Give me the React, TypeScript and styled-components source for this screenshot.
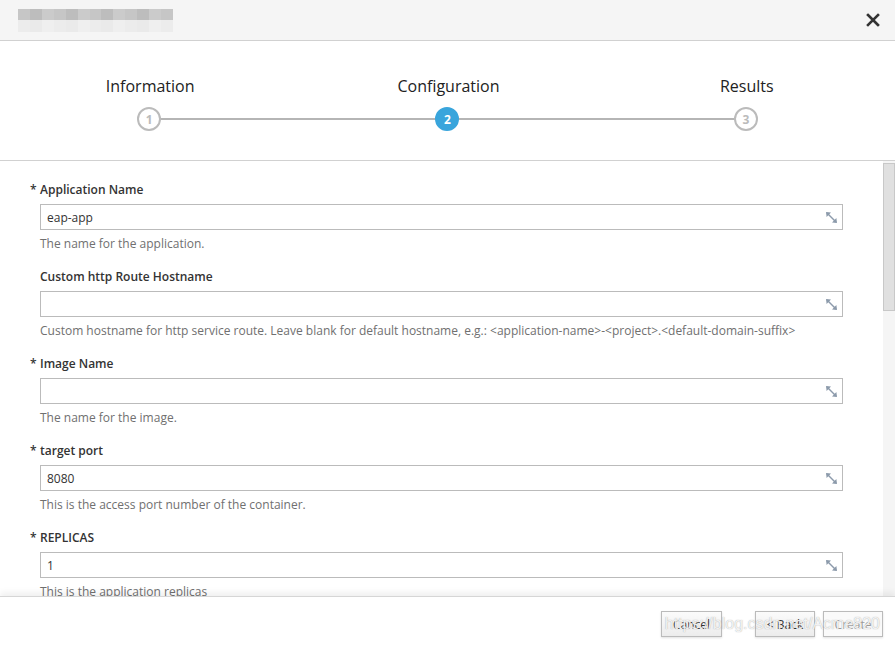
import React from 'react';
import styled, { createGlobalStyle } from 'styled-components';

const GlobalStyle = createGlobalStyle`
	html, body {
		margin: 0;
		padding: 0;
		background: #ffffff;
		font-family: 'Open Sans', 'Noto Sans', Arial, sans-serif;
		color: #333333;
	}
	* { box-sizing: border-box; }
`;

type Field = {
	label: string;
	required?: boolean;
	value?: string;
	help: string;
};

const fields: Field[] = [
	{ label: 'Application Name', required: true, value: 'eap-app', help: 'The name for the application.' },
	{
		label: 'Custom http Route Hostname',
		help: 'Custom hostname for http service route. Leave blank for default hostname, e.g.: <application-name>-<project>.<default-domain-suffix>',
	},
	{ label: 'Image Name', required: true, help: 'The name for the image.' },
	{ label: 'target port', required: true, value: '8080', help: 'This is the access port number of the container.' },
	{ label: 'REPLICAS', required: true, value: '1', help: 'This is the application replicas' },
];

const steps = ['Information', 'Configuration', 'Results'];
const activeStep = 1;

const App: React.FC = () => {
	return (
		<>
			<GlobalStyle />
			<Dialog>
				<Header>
					<BlurTitle>
						{Array.from({ length: 13 }).map((_, i) => (
							<BlurCell key={i} $shade={i % 3} />
						))}
					</BlurTitle>
					<CloseButton aria-label='close'>
						<svg width='14' height='14' viewBox='0 0 14 14'>
							<path d='M2 2 L12 12 M12 2 L2 12' stroke='#333' strokeWidth='2.6' strokeLinecap='square' />
						</svg>
					</CloseButton>
				</Header>

				<Steps>
					{steps.map((s, i) => (
						<Step key={s}>
							<StepLabel>{s}</StepLabel>
							<StepTrack $first={i === 0} $last={i === steps.length - 1}>
								<StepCircle $active={i === activeStep}>{i + 1}</StepCircle>
							</StepTrack>
						</Step>
					))}
				</Steps>

				<Body>
					<FormArea>
						{fields.map((f) => (
							<FieldGroup key={f.label}>
								<Label $required={f.required}>{f.label}</Label>
								<InputBox>
									<InputText>{f.value}</InputText>
									<ExpandIcon width='13' height='13' viewBox='0 0 13 13'>
										<path d='M2 2 L11 11' stroke='#8c9aab' strokeWidth='1.4' />
										<path d='M1 1 L6 1.6 L1.6 6 Z' fill='#8c9aab' />
										<path d='M12 12 L7 11.4 L11.4 7 Z' fill='#8c9aab' />
									</ExpandIcon>
								</InputBox>
								<Help>{f.help}</Help>
							</FieldGroup>
						))}
					</FormArea>
					<ScrollTrack>
						<ScrollThumb />
					</ScrollTrack>
				</Body>

				<Footer>
					<Button $width={61}>Cancel</Button>
					<ButtonPair>
						<Button $width={60}>&lt; Back</Button>
						<Button $width={60} disabled>
							Create
						</Button>
					</ButtonPair>
					<Watermark>https://blog.csdn.net/Acme820</Watermark>
				</Footer>
			</Dialog>
		</>
	);
};

const Dialog = styled.div`
	display: flex;
	flex-direction: column;
	width: 895px;
	height: 649px;
	background: #fff;
	overflow: hidden;
`;

const Header = styled.div`
	display: flex;
	align-items: center;
	justify-content: space-between;
	height: 41px;
	flex-shrink: 0;
	padding: 0 14px 0 18px;
	background: #f5f5f5;
	border-bottom: 1px solid #d1d1d1;
`;

const BlurTitle = styled.div`
	display: flex;
	width: 155px;
	height: 23px;
	margin-top: 1px;
	filter: blur(0.4px);
`;

const BlurCell = styled.span<{ $shade: number }>`
	flex: 1;
	background: linear-gradient(
		to bottom,
		${(p) => ['#c6c6c6', '#bdbdbd', '#cbcbcb'][p.$shade]} 0 50%,
		${(p) => ['#ececec', '#eaeaea', '#efefef'][p.$shade]} 50% 100%
	);
`;

const CloseButton = styled.button`
	display: flex;
	align-items: center;
	justify-content: center;
	width: 16px;
	height: 16px;
	padding: 0;
	border: none;
	background: transparent;
	cursor: pointer;
`;

const Steps = styled.div`
	display: flex;
	height: 120px;
	flex-shrink: 0;
	padding-top: 34px;
	border-bottom: 1px solid #d1d1d1;
`;

const Step = styled.div`
	flex: 1;
	display: flex;
	flex-direction: column;
	align-items: center;
`;

const StepLabel = styled.div`
	font-size: 16px;
	line-height: 22px;
	color: #222;
	margin-bottom: 10px;
	transform: translateX(1px);
`;

const StepTrack = styled.div<{ $first: boolean; $last: boolean }>`
	position: relative;
	align-self: stretch;
	display: flex;
	justify-content: center;

	&::before,
	&::after {
		content: '';
		position: absolute;
		top: 11px;
		height: 2px;
		width: 50%;
		background: #b5b5b5;
	}
	&::before {
		left: 0;
		display: ${(p) => (p.$first ? 'none' : 'block')};
	}
	&::after {
		right: 0;
		display: ${(p) => (p.$last ? 'none' : 'block')};
	}
`;

const StepCircle = styled.div<{ $active: boolean }>`
	position: relative;
	z-index: 1;
	display: flex;
	align-items: center;
	justify-content: center;
	width: 24px;
	height: 24px;
	border-radius: 50%;
	font-size: 12px;
	font-weight: 700;
	background: ${(p) => (p.$active ? '#39a5dc' : '#fff')};
	border: 2px solid ${(p) => (p.$active ? '#39a5dc' : '#bbbbbb')};
	color: ${(p) => (p.$active ? '#fff' : '#bbbbbb')};
`;

const Body = styled.div`
	flex: 1;
	display: flex;
	min-height: 0;
`;

const FormArea = styled.div`
	flex: 1;
	overflow: hidden;
	padding: 21px 40px 0 40px;
`;

const ScrollTrack = styled.div`
	width: 12px;
	flex-shrink: 0;
	padding-top: 2px;
	background: #f5f5f5;
`;

const ScrollThumb = styled.div`
	height: 148px;
	background: #e0e0e0;
	border: 1px solid #c8c8c8;
`;

const FieldGroup = styled.div`
	display: flex;
	flex-direction: column;
	margin-bottom: 17px;
`;

const Label = styled.label<{ $required?: boolean }>`
	position: relative;
	font-size: 12px;
	font-weight: 600;
	line-height: 16px;
	color: #333;
	margin-bottom: 6px;

	&::before {
		content: '*';
		position: absolute;
		left: -10px;
		display: ${(p) => (p.$required ? 'block' : 'none')};
	}
`;

const InputBox = styled.div`
	display: flex;
	align-items: center;
	justify-content: space-between;
	height: 26px;
	padding: 0 4px 0 6px;
	border: 1px solid #bbbbbb;
	background: #fff;
`;

const InputText = styled.span`
	font-size: 12px;
	color: #333;
`;

const ExpandIcon = styled.svg`
	flex-shrink: 0;
`;

const Help = styled.div`
	margin-top: 6px;
	font-size: 12px;
	line-height: 16px;
	color: #707070;
`;

const Footer = styled.div`
	position: relative;
	display: flex;
	justify-content: flex-end;
	align-items: flex-start;
	gap: 33px;
	height: 53px;
	flex-shrink: 0;
	padding: 14px 12px 0 0;
	border-top: 1px solid #d6d6d6;
	box-shadow: 0 -4px 6px rgba(0, 0, 0, 0.06);
	background: #fff;
`;

const ButtonPair = styled.div`
	display: flex;
	gap: 8px;
`;

const Button = styled.button<{ $width: number }>`
	width: ${(p) => p.$width}px;
	height: 26px;
	padding: 0;
	font-family: 'Open Sans', 'Noto Sans', Arial, sans-serif;
	font-size: 12px;
	color: #333;
	background: linear-gradient(to bottom, #fbfbfb, #ececec);
	border: 1px solid #bbbbbb;
	box-shadow: 0 1px 2px rgba(0, 0, 0, 0.12);
	cursor: pointer;

	&:disabled {
		color: #9a9a9a;
		background: #fafafa;
		cursor: default;
	}
`;

const Watermark = styled.div`
	position: absolute;
	right: 15px;
	top: 18px;
	font-family: 'Liberation Sans', Arial, sans-serif;
	font-size: 16px;
	color: rgba(255, 255, 255, 0.85);
	text-shadow: 0 0 1px rgba(120, 120, 120, 0.7);
	pointer-events: none;
`;

export default App;
